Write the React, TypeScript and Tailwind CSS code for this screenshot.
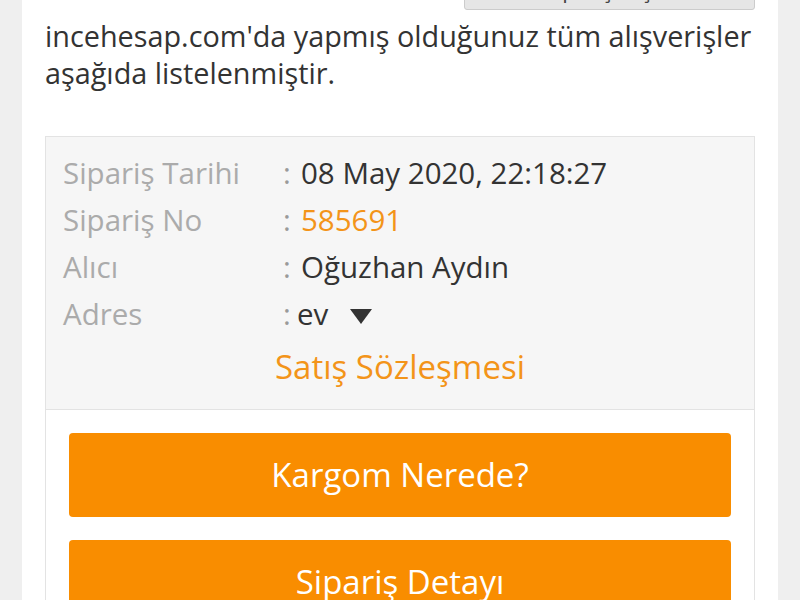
import { Fragment } from "react";

const rows = [
  { label: "Sipariş Tarihi", value: "08 May 2020, 22:18:27", tone: "text-[#333333]" },
  { label: "Sipariş No", value: "585691", tone: "text-[#f39419]" },
  { label: "Alıcı", value: "Oğuzhan Aydın", tone: "text-[#333333]" },
];

const App = () => {
  return (
    <div className="w-[800px] h-[600px] overflow-hidden bg-[#efefef] px-[22px] font-['Open_Sans',sans-serif]">
      <div className="h-full bg-white px-[23px] flex flex-col">
        <div className="flex justify-end">
          <button className="mt-[-31px] w-[291px] h-[41px] bg-[#e6e6e6] border border-[#cccccc] rounded-[3px] text-[22px] text-[#444444]">
            Sipariş Arşivi
          </button>
        </div>

        <p className="mt-[7px] text-[28.8px] leading-[37px] text-[#333333]">
          incehesap.com'da yapmış olduğunuz tüm alışverişler aşağıda listelenmiştir.
        </p>

        <div className="mt-[45px] border border-[#e3e3e3] flex-1">
          <div className="bg-[#f6f6f6] border-b border-[#e3e3e3] pl-[17px] pt-[12px] pb-[20px]">
            <div className="grid grid-cols-[220px_1fr] text-[29.5px] leading-[47px]">
              {rows.map((r) => (
                <Fragment key={r.label}>
                  <div className="text-[#ababab]">{r.label}</div>
                  <div className="flex">
                    <span className="text-[#9a9a9a] w-[18px]">:</span>
                    <span className={r.tone}>{r.value}</span>
                  </div>
                </Fragment>
              ))}
              <div className="text-[#ababab]">Adres</div>
              <div className="flex items-center">
                <span className="text-[#9a9a9a] w-[14px]">:</span>
                <span className="text-[#333333]">ev</span>
                <svg width="22" height="16" viewBox="0 0 22 16" className="ml-[22px] mt-[6px]">
                  <polygon points="0,0 22,0 11,15" fill="#333333" />
                </svg>
              </div>
            </div>
            <div className="text-center text-[33px] leading-[44px] text-[#f39419] mt-[8px] pr-[17px]">
              Satış Sözleşmesi
            </div>
          </div>

          <div className="px-[23px] pt-[23px] flex flex-col gap-[23px]">
            <button className="h-[84px] rounded-[4px] bg-[#f98d00] text-white text-[33px]">
              Kargom Nerede?
            </button>
            <button className="h-[84px] rounded-[4px] bg-[#f98d00] text-white text-[33px]">
              Sipariş Detayı
            </button>
          </div>
        </div>
      </div>
    </div>
  );
};

export default App;
